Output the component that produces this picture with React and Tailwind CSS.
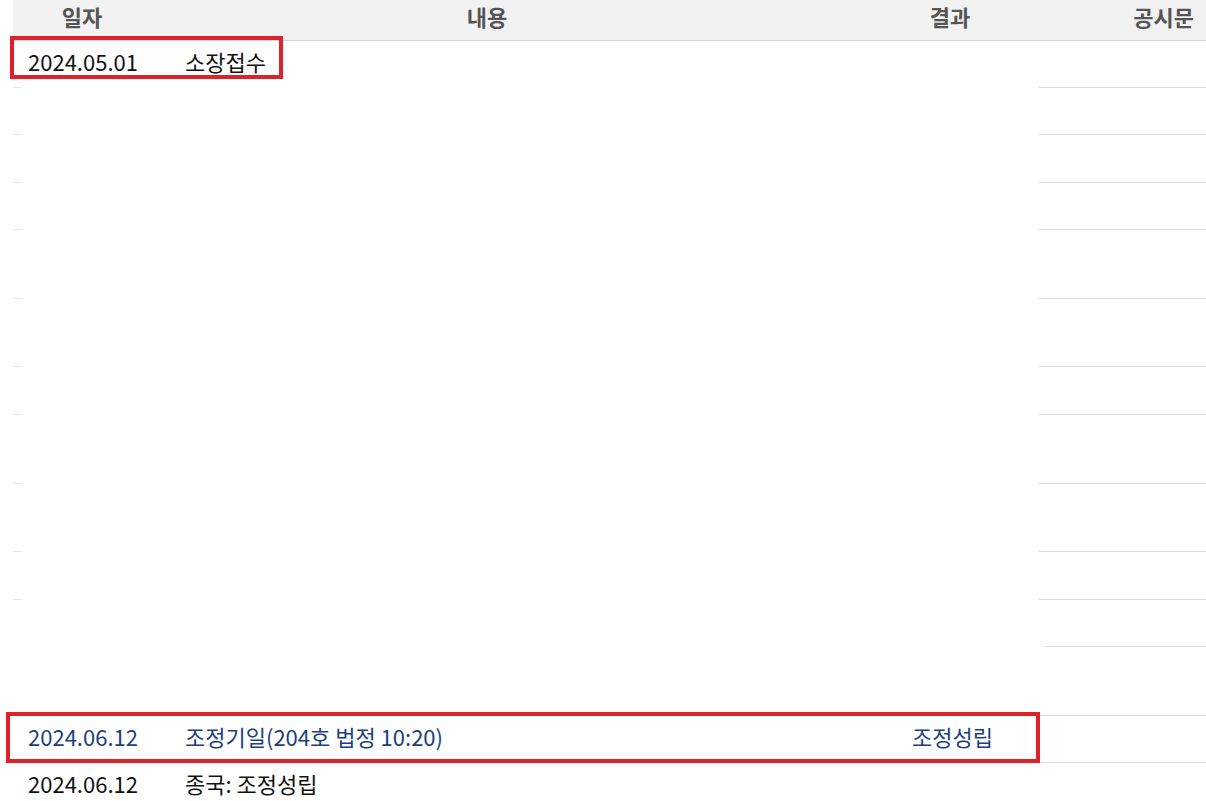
const rows = [
  { h: 'h-[47px]', date: '2024.05.01', content: '소장접수', dash: true },
  { h: 'h-[47px]', dash: true },
  { h: 'h-[48px]', dash: true },
  { h: 'h-[47px]', dash: true },
  { h: 'h-[69px]', dash: true },
  { h: 'h-[68px]', dash: true },
  { h: 'h-[48px]', dash: true },
  { h: 'h-[69px]', dash: true },
  { h: 'h-[68px]', dash: true },
  { h: 'h-[48px]', dash: true },
  { h: 'h-[47px]', short: true },
  { h: 'h-[69px]' },
  { h: 'h-[47px]', date: '2024.06.12', content: '조정기일(204호 법정 10:20)', result: '조정성립', blue: true },
  { h: 'h-[47px]', date: '2024.06.12', content: '종국: 조정성립' },
];

function Row({ row }) {
  const tone = row.blue ? 'text-[#1c3f7f]' : 'text-[#111]';
  return (
    <div className={`flex flex-col ${row.h}`}>
      <div className={`flex flex-1 items-center pb-[5px] text-[22px] ${tone}`}>
        <div className="w-[28px]" />
        <div className="w-[157px]">{row.date}</div>
        <div className="w-[727px]">{row.content}</div>
        <div className="w-[81px] text-center">{row.result}</div>
      </div>
      <div className="flex h-px">
        {row.dash ? <div className="ml-[13px] w-[9px] bg-[#e6e6e6]" /> : <div className="w-[22px]" />}
        <div className={`flex-1 bg-[#dcdcdc] ${row.short ? 'ml-[1023px]' : 'ml-[1017px]'}`} />
      </div>
    </div>
  );
}

export default function App() {
  return (
    <div className="relative h-[801px] w-[1206px] overflow-hidden bg-white font-['Noto_Sans_CJK_KR','Malgun_Gothic',sans-serif]">
      <div className="ml-[13px] flex h-[40px] items-center bg-[#f2f2f2] pb-[7px] text-[22px] font-bold text-[#555]">
        <div className="w-[138px] text-center">일자</div>
        <div className="w-[672px] text-center">내용</div>
        <div className="w-[254px] text-center">결과</div>
        <div className="flex-1 pr-[12px] text-right">공시문</div>
      </div>
      <div className="ml-[13px] h-px bg-[#d4d4d4]" />
      {rows.map((row, i) => (
        <Row key={i} row={row} />
      ))}

      {/* highlight boxes */}
      <div className="absolute left-[10px] top-[36px] h-[43px] w-[273px] border-4 border-[#e0202b]" />
      <div className="absolute left-[6px] top-[712px] h-[51px] w-[1034px] border-4 border-[#e0202b]" />
    </div>
  );
}
